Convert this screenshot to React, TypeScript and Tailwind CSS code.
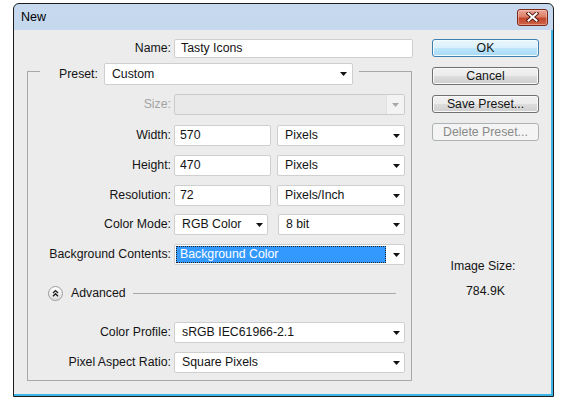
import React from "react";
import clsx from "clsx";

// Small black dropdown triangle used by every combo box
function Caret({ muted = false }: { muted?: boolean }) {
  return (
    <svg width="7" height="4" viewBox="0 0 7 4" className="shrink-0">
      <polygon points="0,0 7,0 3.5,4" fill={muted ? "#a8a8a8" : "#111"} />
    </svg>
  );
}

function Combo({
  value,
  className,
  selected = false,
}: {
  value: string;
  className?: string;
  selected?: boolean;
}) {
  return (
    <div
      className={clsx(
        "flex h-[21px] items-center rounded-[2px] border border-[#cfcfcf] bg-white pr-[4px]",
        className
      )}
    >
      {selected ? (
        <span className="ml-px mr-[7px] flex h-[17px] flex-1 items-center border border-dotted border-[#222] bg-[#3399ff] pl-[3px] text-white">
          {value}
        </span>
      ) : (
        <span className="flex-1 truncate pl-[7px]">{value}</span>
      )}
      <Caret />
    </div>
  );
}

function Field({ value, className }: { value: string; className?: string }) {
  return (
    <div
      className={clsx(
        "flex h-[21px] items-center rounded-[2px] border border-[#cfcfcf] bg-white pl-[5px]",
        className
      )}
    >
      {value}
    </div>
  );
}

function Row({
  label,
  muted = false,
  children,
  className,
}: {
  label: string;
  muted?: boolean;
  children: React.ReactNode;
  className?: string;
}) {
  return (
    <div className={clsx("flex h-[21px] items-center", className)}>
      <span className={clsx("w-[143px] text-right", muted && "text-[#a3a3a3]")}>{label}</span>
      <div className="ml-[3px] flex items-center">{children}</div>
    </div>
  );
}

function Button({
  children,
  variant = "normal",
  className,
}: {
  children: React.ReactNode;
  variant?: "default" | "normal" | "disabled";
  className?: string;
}) {
  return (
    <div
      className={clsx(
        "flex h-[18px] items-center justify-center rounded-[3px] border",
        variant === "default" &&
          "border-[#3c7fb1] bg-[linear-gradient(#eaf6fd_0%,#d9f0fc_50%,#bee6fd_51%,#a7d9f5_100%)] shadow-[inset_0_0_0_1px_#f4fbff]",
        variant === "normal" &&
          "border-[#707070] bg-[linear-gradient(#f2f2f2_0%,#ebebeb_50%,#dddddd_51%,#cfcfcf_100%)] shadow-[inset_0_0_0_1px_#fafafa]",
        variant === "disabled" && "border-[#adb2b5] bg-[#f4f4f4] text-[#8a8a8a]",
        className
      )}
    >
      {children}
    </div>
  );
}

function CloseButton() {
  return (
    <div className="flex h-[17px] w-[31px] items-center justify-center rounded-[3px] border border-[#7b2a1c] bg-[linear-gradient(#eaa797_0%,#dc8068_45%,#c4472c_55%,#cf6447_100%)] shadow-[inset_0_0_0_1px_rgba(255,220,210,0.45)]">
      <svg width="13" height="10" viewBox="0 0 13 10">
        <path d="M2.5 1.5 L10.5 8.5 M10.5 1.5 L2.5 8.5" stroke="#5a1c12" strokeWidth="4" strokeLinecap="square" />
        <path d="M2.5 1.5 L10.5 8.5 M10.5 1.5 L2.5 8.5" stroke="#ffffff" strokeWidth="2" strokeLinecap="square" />
      </svg>
    </div>
  );
}

function ExpandIcon() {
  return (
    <svg width="15" height="15" viewBox="0 0 15 15" className="shrink-0">
      <defs>
        <linearGradient id="adv-fill" x1="0" y1="0" x2="0" y2="1">
          <stop offset="0" stopColor="#ffffff" />
          <stop offset="1" stopColor="#dcdcdc" />
        </linearGradient>
      </defs>
      <circle cx="7.5" cy="7.5" r="7" fill="url(#adv-fill)" stroke="#9c9c9c" />
      <path d="M5 7 L7.5 4.6 L10 7 M5 10.2 L7.5 7.8 L10 10.2" fill="none" stroke="#1e1e1e" strokeWidth="1.4" />
    </svg>
  );
}

export default function App() {
  return (
    <div className="h-[400px] w-[570px] bg-white pl-[13px] pt-[3px] font-['Liberation_Sans',Arial,sans-serif] text-[12.3px] text-[#141414]">
      <div className="flex h-[394px] w-[541px] flex-col overflow-hidden rounded-t-[6px] border border-[#1c1c1c] bg-[linear-gradient(#c6d9ee,#b4cbe6)]">
        {/* caption */}
        <div className="flex h-[26px] shrink-0 items-center justify-between pl-[7px] pr-[5px]">
          <span className="text-[12.5px] text-black">New</span>
          <CloseButton />
        </div>

        {/* client area */}
        <div className="flex flex-1 border-b-2 border-r-2 border-[#3db5e6] bg-[#ececec] pl-[13px] pr-[11px] pt-[9px]">
          {/* form column */}
          <div className="flex w-[386px] flex-col">
            <div className="flex h-[18px] items-center">
              <span className="w-[144px] text-right">Name:</span>
              <div className="ml-[3px] flex h-[19px] w-[239px] items-center rounded-[2px] border border-[#cfcfcf] bg-white pl-[6px]">
                Tasty Icons
              </div>
            </div>

            <div className="mt-[14px] flex w-[385px] flex-col border border-[#a8a8a8] pb-[7px]">
              <div className="-mt-[9px] ml-[12px] flex w-fit items-center bg-[#ececec] pl-[19px] pr-[6px]">
                <span>Preset:</span>
                <Combo value="Custom" className="ml-[6px] h-[22px] w-[249px] pr-[5px]" />
              </div>

              <Row label="Size:" muted className="mt-[9px]">
                <div className="flex h-[21px] w-[231px] rounded-[2px] border border-[#cbcbcb] bg-[#e9e9e9]">
                  <div className="flex-1" />
                  <div className="flex w-[18px] items-center justify-center border-l border-[#e2e2e2] bg-[#f3f3f3]">
                    <Caret muted />
                  </div>
                </div>
              </Row>

              <Row label="Width:" className="mt-[10px]">
                <Field value="570" className="w-[97px]" />
                <Combo value="Pixels" className="ml-[6px] w-[128px]" />
              </Row>

              <Row label="Height:" className="mt-[9px]">
                <Field value="470" className="w-[97px]" />
                <Combo value="Pixels" className="ml-[6px] w-[128px]" />
              </Row>

              <Row label="Resolution:" className="mt-[9px]">
                <Field value="72" className="w-[97px]" />
                <Combo value="Pixels/Inch" className="ml-[6px] w-[128px]" />
              </Row>

              <Row label="Color Mode:" className="mt-[8px]">
                <Combo value="RGB Color" className="w-[94px]" />
                <Combo value="8 bit" className="ml-[10px] w-[127px]" />
              </Row>

              <Row label="Background Contents:" className="mt-[9px]">
                <Combo value="Background Color" selected className="w-[231px]" />
              </Row>

              <div className="mt-[20px] flex h-[16px] items-center pl-[20px] pr-[15px]">
                <ExpandIcon />
                <span className="ml-[8px]">Advanced</span>
                <div className="ml-[7px] h-px flex-1 bg-[#a8a8a8]" />
              </div>

              <Row label="Color Profile:" className="mt-[21px]">
                <Combo value="sRGB IEC61966-2.1" className="w-[231px]" />
              </Row>

              <Row label="Pixel Aspect Ratio:" className="mt-[9px]">
                <Combo value="Square Pixels" className="w-[231px]" />
              </Row>
            </div>
          </div>

          {/* buttons column */}
          <div className="ml-[19px] flex w-[107px] flex-col">
            <Button variant="default">OK</Button>
            <Button className="mt-[10px]">Cancel</Button>
            <Button className="mt-[10px]">Save Preset...</Button>
            <Button variant="disabled" className="mt-[10px]">
              Delete Preset...
            </Button>
            <div className="mt-[118px] pr-[5px] text-center leading-[14px]">Image Size:</div>
            <div className="mt-[11px] text-center leading-[14px]">784.9K</div>
          </div>
        </div>
      </div>
    </div>
  );
}
